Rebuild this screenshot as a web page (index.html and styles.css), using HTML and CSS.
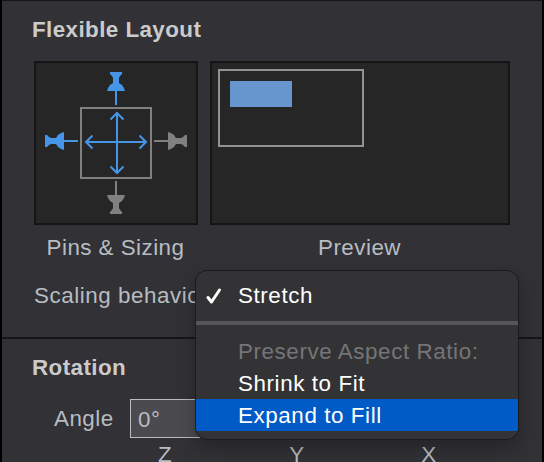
FILE: index.html
```html
<!DOCTYPE html>
<html lang="en">
<head>
<meta charset="utf-8">
<title>Flexible Layout</title>
<link rel="stylesheet" href="styles.css">
</head>
<body>
<main class="panel">
  <section class="layout">
    <h2 class="heading">Flexible Layout</h2>
    <div class="boxes">
      <figure class="sizing">
        <div class="well">
          <svg width="160" height="160" viewBox="36 63 160 160">
            <defs>
              <g id="pin">
                <path d="M-6 -70H6V-68L4 -66L3 -64V-59L6 -57Q8.500 -54 9 -51H-9Q-8.500 -54 -6 -57L-3 -59V-64L-4 -66L-6 -68Z"/>
                <path d="M-1 -51H1V-37H-1Z"/>
              </g>
            </defs>
            <rect class="frame" x="81" y="108" width="70" height="70"/>
            <use href="#pin" class="on" transform="translate(116 142)"/>
            <use href="#pin" class="on" transform="translate(115 141) rotate(-90)"/>
            <use href="#pin" class="off" transform="translate(117 141) rotate(90)"/>
            <use href="#pin" class="off" transform="translate(116 144) rotate(180)"/>
            <path class="arrows" d="M117 113V173M110.500 119.500L117 113L123.500 119.500M110.500 166.500L117 173L123.500 166.500M86 142H146M92.500 135.500L86 142L92.500 148.500M139.500 135.500L146 142L139.500 148.500"/>
          </svg>
        </div>
        <figcaption class="pins-label">Pins &amp; Sizing</figcaption>
      </figure>
      <figure class="preview">
        <div class="well preview-well">
          <div class="canvas"><div class="shape"></div></div>
        </div>
        <figcaption class="preview-label">Preview</figcaption>
      </figure>
    </div>
    <p class="scaling">Scaling behavior</p>
  </section>
  <section class="rotation">
    <h2 class="heading">Rotation</h2>
    <div class="angle-row">
      <span class="angle-label">Angle</span>
      <div class="field">0°</div>
    </div>
    <div class="axes"><span>Z</span><span>Y</span><span>X</span></div>
  </section>
</main>
<div class="menu">
  <div class="item checked">
    <svg class="check" width="20" height="20" viewBox="0 0 20 20"><path d="M4 11.500L7.500 16L15.500 4"/></svg>
    <span>Stretch</span>
  </div>
  <div class="separator"></div>
  <div class="item caption preserve">Preserve Aspect Ratio:</div>
  <div class="item">Shrink to Fit</div>
  <div class="item selected">Expand to Fill</div>
</div>
</body>
</html>
```
FILE: styles.css
```css
* { box-sizing: border-box; }
body {
  margin: 0;
  width: 544px;
  height: 462px;
  overflow: hidden;
  position: relative;
  background: #000;
  color: #b7bdc3;
  font: 22.4px/32px "Liberation Sans", Arial, sans-serif;
  letter-spacing: .46px;
  white-space: nowrap;
}
.panel {
  width: 544px;
  height: 462px;
  overflow: hidden;
  border: solid #000;
  border-width: 0 2px;
  background: #323135;
}
.layout {
  height: 339px;
  padding: 13px 32px 0;
  border-top: 1px solid #161519;
  border-bottom: 2px solid #161519;
}
.heading {
  margin: 0 0 0 -2px;
  color: #cbcbcb;
  font-size: 22.4px;
  line-height: 32px;
  letter-spacing: .42px;
}
.boxes {
  display: grid;
  grid-template-columns: 164px 300px;
  gap: 12px;
  margin-top: 15px;
}
figure { margin: 0; }
.well {
  height: 164px;
  border: 2px solid #151516;
  background: #262626;
}
.well svg { display: block; }
figcaption { margin-top: 7px; text-align: center; }
.pins-label { padding-right: 1px; }
.preview-label { padding-right: 1px; }
.frame { fill: none; stroke: #808080; stroke-width: 2; }
.on { fill: #4795e6; }
.off { fill: #808080; }
.arrows { fill: none; stroke: #4795e6; stroke-width: 2; }
.preview-well { padding: 6px; }
.canvas {
  width: 146px;
  height: 78px;
  padding: 10px;
  border: 2px solid #929292;
}
.shape { width: 62px; height: 26px; background: #6795cd; }
.scaling { margin: 16px 0 0; letter-spacing: .55px; }
.rotation { padding: 13px 32px 0; }
.angle-row {
  display: flex;
  align-items: center;
  margin-top: 15px;
}
.angle-label { width: 96px; padding: 1px 0 0 20px; }
.field {
  width: 250px;
  height: 39px;
  padding: 4px 7px;
  border: 1px solid #b9bcc0;
  background: #4b4a4e;
}
.axes {
  display: grid;
  grid-template-columns: repeat(3, 132px);
  padding: 1px 0 0 65px;
  text-align: center;
}
.menu {
  position: absolute;
  left: 195px;
  top: 270px;
  width: 324px;
  height: 170px;
  padding-top: 8px;
  overflow: hidden;
  border: 1px solid #1b1b1c;
  border-radius: 12px;
  background: #333335;
  box-shadow: 0 8px 20px rgba(0, 0, 0, .28);
  color: #fff;
  letter-spacing: .58px;
}
.item { height: 32px; padding: 1px 0 0 42px; }
.checked { display: flex; align-items: center; padding-left: 8px; }
.check { width: 20px; margin-right: 14px; fill: none; stroke: #fff; stroke-width: 3; stroke-linecap: round; stroke-linejoin: round; }
.separator { height: 4px; margin: 10px 0; background: #565658; }
.caption { color: #757578; }
.selected { background: #005bc6; }
```
